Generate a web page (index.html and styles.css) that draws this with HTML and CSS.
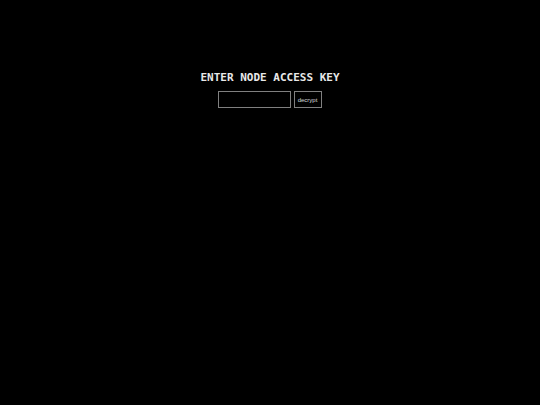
FILE: index.html
```html
<!DOCTYPE html>
<html>
<head>
<meta charset="utf-8">
<link rel="stylesheet" href="styles.css">
</head>
<body>
<main class="gate">
  <h1 class="title">ENTER NODE ACCESS KEY</h1>
  <form class="form">
    <input class="key" type="password">
    <button class="btn" type="button">decrypt</button>
  </form>
</main>
</body>
</html>
```
FILE: styles.css
```css
html, body {
  margin: 0;
  padding: 0;
  background: #000;
  width: 540px;
  height: 405px;
  overflow: hidden;
}
.gate {
  display: flex;
  flex-direction: column;
  align-items: center;
  padding-top: 71px;
}
.title {
  margin: 0;
  font-family: "DejaVu Sans Mono", monospace;
  font-weight: bold;
  font-size: 11px;
  line-height: 14px;
  color: #e8e8e8;
  letter-spacing: 0;
}
.form {
  display: flex;
  gap: 3px;
  margin-top: 6px;
  margin-left: -1px;
}
.key {
  box-sizing: border-box;
  width: 73px;
  height: 17px;
  margin: 0;
  padding: 0 2px;
  background: #000;
  border: 1px solid #808080;
  color: #fff;
  outline: none;
}
.btn {
  box-sizing: border-box;
  width: 28px;
  height: 17px;
  margin: 0;
  padding: 0;
  background: #000;
  border: 1px solid #808080;
  color: #d8d8d8;
  font-family: "Liberation Sans", Arial, sans-serif;
  font-size: 6px;
}
```
